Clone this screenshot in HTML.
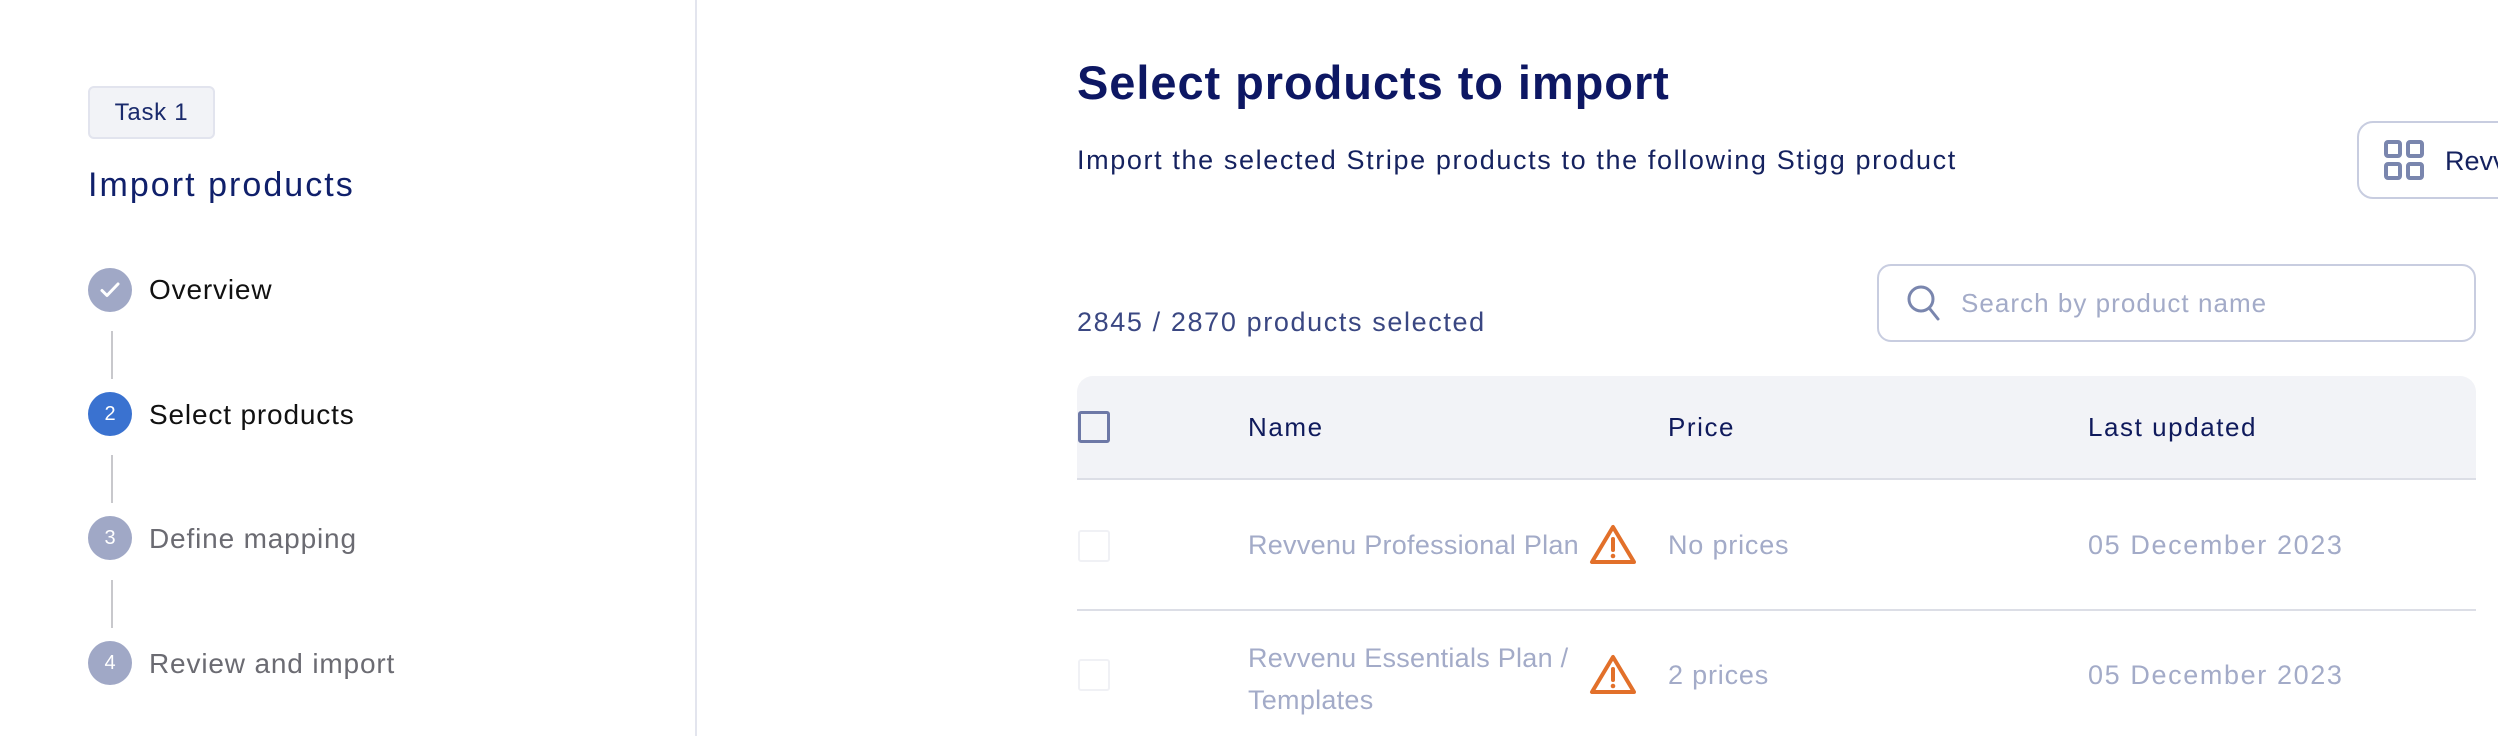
<!DOCTYPE html>
<html><head><meta charset="utf-8"><style>
*{margin:0;padding:0;box-sizing:border-box}
body{width:2498px;height:736px;background:#fff;font-family:"Liberation Sans",sans-serif;position:relative;overflow:hidden;color:#0f1a5c}
.a{position:absolute;white-space:nowrap}
.circ{position:absolute;width:44px;height:44px;border-radius:50%;background:#a0a8c6;color:#fff;font-size:20px;display:flex;align-items:center;justify-content:center;left:88px}
.line{position:absolute;left:111px;width:2px;height:48px;background:#c8c8cc}
.step{position:absolute;left:149px;font-size:28px;line-height:32px;letter-spacing:0.03em}
.cb{position:absolute;width:32px;height:32px;border-radius:3px;left:1078px}
.g{color:#a3abc8;font-size:27px;letter-spacing:0.03em}
.n{letter-spacing:0.06em}
</style></head><body>
<div class="a" style="left:695px;top:0;width:2px;height:736px;background:#e3e5ee"></div>
<div class="a" style="left:88px;top:86px;width:127px;height:53px;border:2px solid #e2e4ee;background:#f2f3f7;border-radius:6px;font-size:24px;line-height:49px;text-align:center;color:#1a2a6c;letter-spacing:0.03em">Task 1</div>
<div class="a n" style="left:88px;top:165px;font-size:34px;line-height:40px;color:#10206b">Import products</div>

<div class="circ" style="top:268px"><svg width="24" height="24" viewBox="0 0 24 24"><path d="M4 12.5l5 5L20 6" stroke="#fff" stroke-width="3" fill="none" stroke-linecap="round" stroke-linejoin="round"/></svg></div>
<div class="step" style="top:274px;color:#111">Overview</div>
<div class="line" style="top:331px"></div>
<div class="circ" style="top:392px;background:#3a72d0">2</div>
<div class="step" style="top:399px;color:#111">Select products</div>
<div class="line" style="top:455px"></div>
<div class="circ" style="top:516px">3</div>
<div class="step" style="top:523px;color:#6b6b72">Define mapping</div>
<div class="line" style="top:580px"></div>
<div class="circ" style="top:641px">4</div>
<div class="step" style="top:648px;color:#6b6b72">Review and import</div>

<div class="a" style="left:1077px;top:56px;font-size:47px;font-weight:bold;line-height:54px;color:#0d1763;letter-spacing:0.02em">Select products to import</div>
<div class="a n" style="left:1077px;top:144px;font-size:27px;line-height:32px;color:#15225f">Import the selected Stripe products to the following Stigg product</div>
<div class="a" style="left:2357px;top:121px;width:180px;height:78px;border:2px solid #c8cde0;border-radius:16px"></div>
<svg class="a" style="left:2384px;top:140px" width="40" height="40" viewBox="0 0 40 40"><g fill="none" stroke="#7a86ae" stroke-width="4"><rect x="2" y="2" width="14" height="14" rx="2"/><rect x="24" y="2" width="14" height="14" rx="2"/><rect x="2" y="24" width="14" height="14" rx="2"/><rect x="24" y="24" width="14" height="14" rx="2"/></g></svg>
<div class="a" style="left:2445px;top:145px;font-size:27px;line-height:32px;color:#15225f">Revvenu</div>

<div class="a n" style="left:1077px;top:306px;font-size:27px;line-height:32px;color:#3a4782">2845 / 2870 products selected</div>
<div class="a" style="left:1877px;top:264px;width:599px;height:78px;border:2px solid #c8cde0;border-radius:14px"></div>
<svg class="a" style="left:1906px;top:284px" width="34" height="38" viewBox="0 0 34 38"><circle cx="15" cy="15" r="12" fill="none" stroke="#7a86ae" stroke-width="3"/><path d="M24 25l8 10" stroke="#7a86ae" stroke-width="3" stroke-linecap="round"/></svg>
<div class="a" style="left:1961px;top:287px;font-size:26px;line-height:32px;color:#a3abc8;letter-spacing:0.04em">Search by product name</div>

<div class="a" style="left:1077px;top:376px;width:1399px;height:104px;background:#f2f3f7;border-radius:16px 16px 0 0;border-bottom:2px solid #dcdee6"></div>
<div class="cb" style="top:411px;border:3px solid #6d78a6"></div>
<div class="a n" style="left:1248px;top:411px;font-size:26px;line-height:32px">Name</div>
<div class="a n" style="left:1668px;top:411px;font-size:26px;line-height:32px">Price</div>
<div class="a n" style="left:2088px;top:411px;font-size:26px;line-height:32px">Last updated</div>

<div class="cb" style="top:530px;border:2px solid #f0f1f5"></div>
<div class="a g" style="left:1248px;top:529px;line-height:32px;letter-spacing:0.01em">Revvenu Professional Plan</div>
<svg class="a" style="left:1589px;top:524px" width="48" height="42" viewBox="0 0 48 42"><path d="M24 3L3 38h42z" fill="none" stroke="#e2702a" stroke-width="4" stroke-linejoin="round"/><path d="M24 15v11" stroke="#e2702a" stroke-width="4" stroke-linecap="round"/><circle cx="24" cy="32" r="2.3" fill="#e2702a"/></svg>
<div class="a g" style="left:1668px;top:529px;line-height:32px">No prices</div>
<div class="a g" style="left:2088px;top:529px;line-height:32px;letter-spacing:0.06em">05 December 2023</div>
<div class="a" style="left:1077px;top:609px;width:1399px;height:2px;background:#dcdee6"></div>

<div class="cb" style="top:659px;border:2px solid #f0f1f5"></div>
<div class="a g" style="left:1248px;top:637px;line-height:42px;letter-spacing:0.01em">Revvenu Essentials Plan /<br>Templates</div>
<svg class="a" style="left:1589px;top:654px" width="48" height="42" viewBox="0 0 48 42"><path d="M24 3L3 38h42z" fill="none" stroke="#e2702a" stroke-width="4" stroke-linejoin="round"/><path d="M24 15v11" stroke="#e2702a" stroke-width="4" stroke-linecap="round"/><circle cx="24" cy="32" r="2.3" fill="#e2702a"/></svg>
<div class="a g" style="left:1668px;top:659px;line-height:32px">2 prices</div>
<div class="a g" style="left:2088px;top:659px;line-height:32px;letter-spacing:0.06em">05 December 2023</div>
</body></html>
